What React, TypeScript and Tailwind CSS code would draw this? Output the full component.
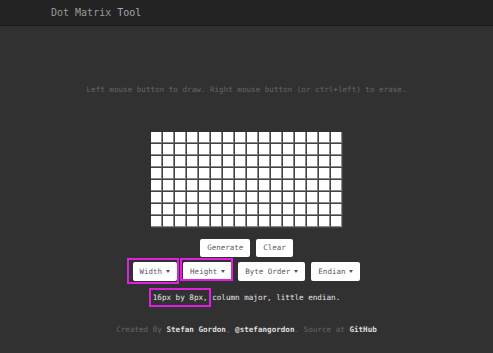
import React from "react";

const mono = { fontFamily: '"DejaVu Sans Mono", "Liberation Mono", monospace' };

function Caret() {
    return <span className="inline-block ml-[4px] mb-[1px] align-middle w-0 h-0 border-l-[2.5px] border-r-[2.5px] border-t-[3px] border-l-transparent border-r-transparent border-t-[#555]" />;
}

function Btn({ children, caret, highlight }: { children: React.ReactNode; caret?: boolean; highlight?: string }) {
    return (
        <button className="relative h-[19px] px-[7px] bg-white rounded-[2px] text-[7.5px] text-[#5a5a5a] leading-none flex items-center">
            {children}
            {caret && <Caret />}
            {highlight && <span className={`absolute border-2 border-[#e020e0] pointer-events-none ${highlight}`} />}
        </button>
    );
}

export default function App() {
    const cells = Array.from({ length: 16 * 8 });
    return (
        <div className="w-[493px] h-[353px] bg-[#313131] flex flex-col overflow-hidden" style={mono}>
            <header className="h-[26px] bg-[#232323] border-b border-[#1a1a1a] flex items-center pl-[51px] shrink-0">
                <span className="text-[10px] text-[#9a9a9a]">Dot Matrix <span className="text-[#a4a8ae]">Tool</span></span>
            </header>

            <p className="mt-[59px] text-center text-[7.6px] leading-[10px] text-[#666]">
                Left mouse button to draw. Right mouse button (or ctrl+left) to erase.
            </p>

            <div className="mt-[37px] mx-auto grid grid-cols-[repeat(16,12px)] w-[192px]">
                {cells.map((_, i) => (
                    <div
                        key={i}
                        className="w-[12px] h-[12px] bg-white border-r border-b border-[#444] shadow-[inset_-1px_-1px_0_#8a8a8a]"
                    />
                ))}
            </div>

            <div className="mt-[11px] flex justify-center gap-[6px]">
                <button className="h-[18px] px-[7px] bg-white rounded-[2px] text-[7.5px] text-[#5a5a5a] leading-none">Generate</button>
                <button className="h-[18px] px-[7px] bg-white rounded-[2px] text-[7.5px] text-[#5a5a5a] leading-none">Clear</button>
            </div>

            <div className="mt-[5px] flex justify-center gap-[6px]">
                <Btn caret highlight="-left-[6px] -right-[2px] -top-[4px] -bottom-[3px]">Width</Btn>
                <Btn caret highlight="-left-[3px] -right-[1px] -top-[4px] bottom-[0px]">Height</Btn>
                <Btn caret>Byte Order</Btn>
                <Btn caret>Endian</Btn>
            </div>

            <p className="mt-[12px] text-center text-[7.6px] leading-[10px] text-[#e6e6e6] font-medium">
                <span className="relative">
                    16px by 8px,
                    <span className="absolute -left-[4px] -right-[3px] -top-[5px] -bottom-[5px] border-2 border-[#e020e0]" />
                </span>{" "}
                column major, little endian.
            </p>

            <p className="mt-[22px] text-center text-[7.6px] leading-[10px] text-[#666]">
                Created By <span className="text-[#ddd] font-bold">Stefan Gordon</span>,{" "}
                <span className="text-[#ddd] font-bold">@stefangordon</span>. Source at{" "}
                <span className="text-[#ddd] font-bold">GitHub</span>
            </p>
        </div>
    );
}
